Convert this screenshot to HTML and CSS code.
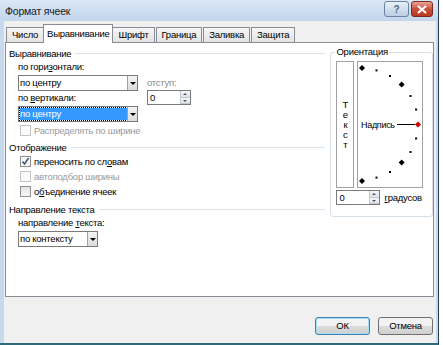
FILE: index.html
```html
<!DOCTYPE html>
<html lang="ru">
<head>
  <meta charset="UTF-8">
  <title>Формат ячеек</title>
  <link rel="stylesheet" href="styles.css">
</head>
<body>
  <div class="window">
    <div class="titlebar">
      <span class="title">Формат ячеек</span>
      <div class="caption-buttons">
        <span class="cap-btn help">?</span>
        <span class="cap-btn close">
          <svg width="12" height="9" viewBox="0 0 12 9"><path d="M2 1 L10 8 M10 1 L2 8" stroke="#fff" stroke-width="2.2"/></svg>
        </span>
      </div>
    </div>

    <div class="client">
      <div class="tabs">
        <span class="tab">Число</span>
        <span class="tab active">Выравнивание</span>
        <span class="tab">Шрифт</span>
        <span class="tab">Граница</span>
        <span class="tab">Заливка</span>
        <span class="tab">Защита</span>
      </div>

      <div class="panel">
        <div class="left">
          <div class="heading"><span>Выравнивание</span></div>
          <div class="align-row">
            <div class="align-col">
              <div class="label">по гори<u>з</u>онтали:</div>
              <div class="select wide"><span class="value">по центру</span><span class="drop"></span></div>
              <div class="label">по <u>в</u>ертикали:</div>
              <div class="select wide"><span class="value selected">по центру</span><span class="drop"></span></div>
            </div>
            <div class="indent-col">
              <div class="label muted">отступ:</div>
              <div class="spin"><span class="value">0</span><span class="spin-btns"><i class="up"></i><i class="down"></i></span></div>
            </div>
          </div>
          <div class="check disabled first"><span class="box"></span>Распределять по ширине</div>

          <div class="heading"><span>Отображение</span></div>
          <div class="check"><span class="box checked"><svg width="9" height="9" viewBox="0 0 9 9"><path d="M1.5 4.5 L3.5 7 L7.5 1" stroke="#3a4f7a" stroke-width="1.4" fill="none"/></svg></span>переносить по сл<u>о</u>вам</div>
          <div class="check disabled"><span class="box"></span>автоподбор ширины</div>
          <div class="check"><span class="box shaded"></span>о<u>б</u>ъединение ячеек</div>

          <div class="heading"><span>Направление текста</span></div>
          <div class="label">направление <u>т</u>екста:</div>
          <div class="select narrow"><span class="value">по контексту</span><span class="drop"></span></div>
        </div>

        <div class="orient">
          <span class="orient-title">Ориентация</span>
          <div class="orient-boxes">
            <div class="vertical-text">
              <span>Т</span><span>е</span><span>к</span><span>с</span><span>т</span>
            </div>
            <div class="dial">
              <svg width="64" height="125" viewBox="0 0 64 125">
                <g fill="#000">
                  <path d="M4 3 L7 6 L4 9 L1 6 Z"/>
                  <path d="M4 116 L7 119 L4 122 L1 119 Z"/>
                  <path d="M43.6 19.4 L46.6 22.4 L43.6 25.4 L40.6 22.4 Z"/>
                  <path d="M43.6 97.6 L46.6 100.6 L43.6 103.6 L40.6 100.6 Z"/>
                  <rect x="17.5" y="7.4" width="2" height="2"/>
                  <rect x="31" y="13" width="2" height="2"/>
                  <rect x="51.5" y="33" width="2" height="2"/>
                  <rect x="57.1" y="46.5" width="2" height="2"/>
                  <rect x="57.1" y="75.5" width="2" height="2"/>
                  <rect x="51.5" y="89" width="2" height="2"/>
                  <rect x="31" y="109" width="2" height="2"/>
                  <rect x="17.5" y="114.6" width="2" height="2"/>
                </g>
                <text x="3" y="66" class="dial-text">Надпись</text>
                <line x1="39" y1="62.5" x2="57" y2="62.5" stroke="#000" stroke-width="1"/>
                <path d="M60 59.5 L63 62.5 L60 65.5 L57 62.5 Z" fill="#d00000"/>
              </svg>
            </div>
          </div>
          <div class="degrees">
            <div class="spin small"><span class="value">0</span><span class="spin-btns"><i class="up"></i><i class="down"></i></span></div>
            <span class="deg-label"><u>г</u>радусов</span>
          </div>
        </div>
      </div>

      <div class="footer">
        <span class="button default">ОК</span>
        <span class="button">Отмена</span>
      </div>
    </div>
  </div>
</body>
</html>
```

FILE: styles.css
```css
body { margin: 0; background: #fff; font-family: "Liberation Sans", Arial, sans-serif; font-size: 9.5px; letter-spacing: -0.25px; color: #000; }
u { text-decoration: underline; text-underline-offset: 1px; }

.window { width: 438px; height: 343px; background: #c6d9ee; border-right: 1px solid #2a3d52; border-bottom: 2px solid #2e6a7a; display: flex; flex-direction: column; }
.titlebar { height: 21px; display: flex; align-items: center; justify-content: space-between; padding: 0 5px 0 5px; background: linear-gradient(#dbe8f6, #c3d6ec); }
.title { font-size: 10.5px; color: #1a1a1a; letter-spacing: -0.2px; }
.caption-buttons { display: flex; gap: 2px; margin-top: -3px; }
.cap-btn { height: 14px; border: 1px solid #6f829c; border-radius: 3px; display: flex; align-items: center; justify-content: center; }
.help { width: 23px; background: linear-gradient(#e8f0f9, #bccde3); color: #55657c; font-size: 10px; font-weight: bold; }
.close { width: 20px; background: linear-gradient(#e8a593, #c7503a 50%, #b8381f); border-color: #7a2b22; }

.client { flex: 1; margin: 0 2px 0 4px; background: #f0f0f0; display: flex; flex-direction: column; padding: 2px 2px 0 1px; }

.tabs { display: flex; align-items: flex-end; height: 19px; padding-left: 1px; }
.tab { height: 14px; line-height: 14px; padding: 0 5px; border: 1px solid #898c95; border-bottom: none; margin-right: 1px; background: linear-gradient(#f6f6f6, #e3e3e3); }
.tab.active { height: 18px; line-height: 17px; background: #fff; position: relative; z-index: 1; margin: 0 -1px -1px -2px; padding: 0 3px; }

.panel { height: 250px; background: #fff; border: 1px solid #898c95; display: flex; padding: 3px 0 0 3px; }

.left { width: 318px; }
.heading { display: flex; align-items: center; height: 14px; }
.heading::after { content: ""; flex: 1; height: 1px; background: #dce3ea; margin-left: 4px; }
.label { height: 14px; line-height: 14px; padding-left: 9px; }
.label.muted { padding-left: 0; color: #8a8a8a; }

.align-row { display: flex; }
.indent-col { padding: 16px 0 0 9px; }

.select { margin: 1px 0 0 9px; height: 14px; border: 1px solid #7a7a7a; display: flex; background: #fff; }
.select.wide { width: 118px; }
.select.narrow { width: 78px; }
.select .value { flex: 1; line-height: 14px; padding-left: 1px; }
.select .value.selected { background: #3399ff; color: #fff; margin: 1px 0 1px 1px; line-height: 12px; padding-left: 0; outline: 1px dotted #000; }
.drop { width: 9px; border-left: 1px solid #a0a0a0; background: linear-gradient(#f4f4f4, #dcdcdc); position: relative; }
.drop::after { content: ""; position: absolute; left: 2px; top: 6px; border: 3px solid transparent; border-top: 3px solid #000; border-bottom: none; }

.spin { width: 42px; height: 13px; border: 1px solid #7a7a7a; display: flex; background: #fff; }
.spin .value { flex: 1; line-height: 13px; padding-left: 2px; }
.spin-btns { width: 9px; display: flex; flex-direction: column; border-left: 1px solid #c8c8c8; }
.spin-btns i { flex: 1; background: linear-gradient(#f4f6f8, #dfe3e8); position: relative; border-bottom: 1px solid #c8c8c8; }
.spin-btns i::after { content: ""; position: absolute; left: 2px; top: 2px; border: 2px solid transparent; }
.spin-btns .up::after { border-bottom: 2px solid #4a5a70; border-top: none; }
.spin-btns .down::after { border-top: 2px solid #4a5a70; border-bottom: none; }

.check { display: flex; align-items: center; height: 15px; padding-left: 11px; }
.check.first { height: 14px; margin-top: 1px; margin-bottom: 3px; }
.box { width: 9px; height: 9px; border: 1px solid #8e8f8f; background: #f7f7f7; margin-right: 3px; display: flex; align-items: center; justify-content: center; }
.box.shaded { background: linear-gradient(#e3e3e3, #f8f8f8); }
.check.disabled { color: #9b9b9b; }
.check.disabled .box { border-color: #c4c4c4; background: #fbfbfb; }
.check + .heading { margin-top: 3px; }

.orient { width: 96px; height: 155px; margin: 6px 0 0 5px; border: 1px solid #d5dfe5; border-radius: 3px; position: relative; padding: 8px 0 0 5px; }
.orient-title { position: absolute; left: 4px; top: -7px; background: #fff; padding: 0 1px; }
.orient-boxes { display: flex; gap: 3px; }
.vertical-text { width: 16px; height: 125px; border: 1px solid #a0a0a0; display: flex; flex-direction: column; align-items: center; justify-content: center; line-height: 10px; font-size: 9.5px; letter-spacing: 0; }
.dial { width: 64px; height: 125px; border: 1px solid #a0a0a0; }
.dial svg { display: block; }
.dial-text { font-family: "Liberation Sans", Arial, sans-serif; font-size: 9px; letter-spacing: -0.3px; }
.degrees { display: flex; align-items: center; margin-top: 2px; gap: 4px; }

.footer { flex: 1; display: flex; justify-content: flex-end; align-items: center; gap: 8px; padding: 12px 1px 0 0; }
.button { width: 53px; height: 16px; line-height: 16px; text-align: center; border: 1px solid #707070; border-radius: 3px; background: linear-gradient(#f2f2f2 50%, #dddddd 50%, #cfcfcf); }
.button.default { border-color: #3c7fb1; box-shadow: inset 0 0 0 1px #a6e0f7; }
```
